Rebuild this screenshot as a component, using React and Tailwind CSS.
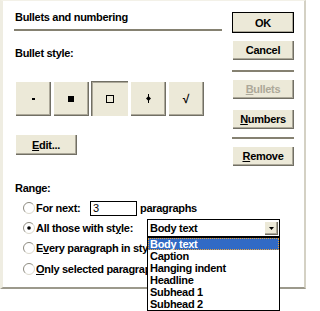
import React from "react";

const raised =
    "bg-[#ECE9D8] shadow-[inset_1px_1px_0_#fff,inset_-1px_-1px_0_#716F64,inset_-2px_-2px_0_#ACA899]";
const pressed =
    "bg-[#ECE9D8] shadow-[inset_1px_1px_0_#716F64,inset_2px_2px_0_#ACA899]";

const Radio = ({ checked }) => (
    <svg width="12" height="12" viewBox="0 0 12 12" className="shrink-0">
        <circle cx="6" cy="6" r="5.5" fill="#fff" />
        <path d="M2.11 9.89 A5.5 5.5 0 0 1 9.89 2.11" fill="none" stroke="#8E8B80" />
        <path d="M9.89 2.11 A5.5 5.5 0 0 1 2.11 9.89" fill="none" stroke="#DAD7CB" />
        {checked && <circle cx="6" cy="6" r="1.8" fill="#000" />}
    </svg>
);

const Button = ({ children, className = "", def = false, disabled = false }) => (
    <div
        className={`flex items-center justify-center ${raised} ${def ? "outline outline-1 outline-black -outline-offset-1" : ""} ${disabled ? "text-[#ACA899]" : "text-black"} ${className}`}
    >
        {children}
    </div>
);

const styles = ["Body text", "Caption", "Hanging indent", "Headline", "Subhead 1", "Subhead 2"];

export default function App() {
    return (
        <div className="relative w-[306px] h-[311px] bg-white overflow-hidden font-['Liberation_Sans',Arial,sans-serif] font-bold text-[11px] leading-[12px] tracking-[-0.3px] text-black">
            {/* dialog */}
            <div className="flex h-[289px] border-l-[3px] border-l-[#EFEDE2] border-t border-t-[#F3F1E8] border-r-2 border-r-[#D4D1C4] border-b-2 border-b-[#9C998C]">
                {/* left column */}
                <div className="w-[229px] shrink-0 pl-[12px] pt-[10px] flex flex-col">
                    <div className="h-[12px] whitespace-nowrap">Bullets and numbering</div>
                    <div className="mt-[6px] -ml-px w-[208px] h-[2px] bg-[#858171]" />
                    <div className="mt-[16px] h-[12px]">Bullet style:</div>

                    <div className="mt-[22px] flex gap-[2px] h-[35px]">
                        <Button className="w-[36px]">
                            <div className="w-[3px] h-[2px] bg-black" />
                        </Button>
                        <Button className="w-[36px]">
                            <div className="w-[6px] h-[6px] bg-black" />
                        </Button>
                        <div className={`w-[37px] flex items-center justify-center ${pressed}`}>
                            <div className="w-[8px] h-[8px] border border-black" />
                        </div>
                        <Button className="w-[36px]">
                            <svg width="5" height="9" viewBox="0 0 5 9">
                                <rect x="2" y="0" width="1" height="9" fill="#000" />
                                <polygon points="0,4.5 2.5,2 5,4.5 2.5,7" fill="#000" />
                            </svg>
                        </Button>
                        <Button className="w-[36px]">
                            <span className="text-[12px]">√</span>
                        </Button>
                    </div>

                    <Button className="mt-[18px] w-[62px] h-[21px]">
                        <span><span className="underline">E</span>dit...</span>
                    </Button>

                    <div className="mt-[27px] h-[12px]">Range:</div>

                    <div className="mt-[4px] flex flex-col pl-[8px]">
                        <div className="h-[20px] flex items-center">
                            <Radio />
                            <span className="ml-px w-[54px] shrink-0">For next:</span>
                            <div className="w-[47px] h-[15px] shrink-0 border border-black bg-white pl-[2px] font-normal leading-[13px]">
                                3
                            </div>
                            <span className="ml-[3px] whitespace-nowrap">paragraphs</span>
                        </div>
                        <div className="h-[20px] flex items-center">
                            <Radio checked />
                            <span className="ml-px w-[111px] shrink-0 whitespace-nowrap">
                                All those with st<span className="underline">y</span>le:
                            </span>
                            <div className="w-[133px] h-[18px] shrink-0 border border-black bg-white flex items-center justify-between pl-[2px]">
                                <span>Body text</span>
                                <div className={`w-[14px] h-[14px] mr-px flex items-center justify-center ${raised}`}>
                                    <svg width="5" height="3" viewBox="0 0 5 3">
                                        <polygon points="0,0 5,0 2.5,3" fill="#000" />
                                    </svg>
                                </div>
                            </div>
                        </div>
                        <div className="h-[20px] flex items-center">
                            <Radio />
                            <span className="ml-px w-[111px] shrink-0 overflow-hidden whitespace-nowrap">
                                E<span className="underline">v</span>ery paragraph in style
                            </span>
                        </div>
                        <div className="mt-px h-[20px] flex items-center">
                            <Radio />
                            <span className="ml-px w-[111px] shrink-0 overflow-hidden whitespace-nowrap">
                                <span className="underline">O</span>nly selected paragraphs
                            </span>
                        </div>
                    </div>
                </div>

                {/* right column */}
                <div className="w-[62px] shrink-0 pt-[11px] flex flex-col">
                    <Button def className="h-[21px]">OK</Button>
                    <Button className="mt-[7px] h-[20px]">Cancel</Button>
                    <div className="mt-[10px] h-[2px] bg-[#858171]" />
                    <Button disabled className="mt-[7px] h-[20px]">
                        <span><span className="underline">B</span>ullets</span>
                    </Button>
                    <Button className="mt-[10px] h-[20px]">
                        <span><span className="underline">N</span>umbers</span>
                    </Button>
                    <div className="mt-[8px] h-[2px] bg-[#858171]" />
                    <Button className="mt-[7px] h-[20px]">
                        <span><span className="underline">R</span>emove</span>
                    </Button>
                </div>
            </div>

            {/* open dropdown list */}
            <div className="absolute left-[147px] top-[237px] w-[133px] h-[74px] border border-black bg-white">
                {styles.map((s, i) => (
                    <div
                        key={s}
                        className={`h-[12px] whitespace-nowrap ${i === 0 ? "bg-[#316AC5] text-white border border-dotted border-[#E8A33C] pl-px leading-[10px]" : "pl-[2px] leading-[12px]"}`}
                    >
                        {s}
                    </div>
                ))}
            </div>
        </div>
    );
}
